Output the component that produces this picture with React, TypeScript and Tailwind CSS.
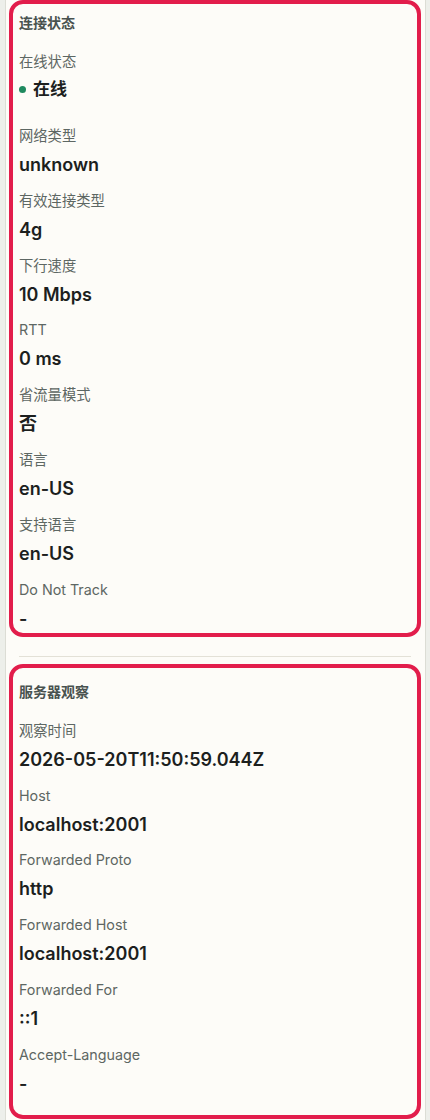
import React from "react";

type Item = { label: string; value: string; online?: boolean };

const connection: Item[] = [
  { label: "在线状态", value: "在线", online: true },
  { label: "网络类型", value: "unknown" },
  { label: "有效连接类型", value: "4g" },
  { label: "下行速度", value: "10 Mbps" },
  { label: "RTT", value: "0 ms" },
  { label: "省流量模式", value: "否" },
  { label: "语言", value: "en-US" },
  { label: "支持语言", value: "en-US" },
  { label: "Do Not Track", value: "-" },
];

const server: Item[] = [
  { label: "观察时间", value: "2026-05-20T11:50:59.044Z" },
  { label: "Host", value: "localhost:2001" },
  { label: "Forwarded Proto", value: "http" },
  { label: "Forwarded Host", value: "localhost:2001" },
  { label: "Forwarded For", value: "::1" },
  { label: "Accept-Language", value: "-" },
];

function Row({ item }: { item: Item }) {
  return (
    <div className={item.online ? "flex flex-col mb-[11px]" : "flex flex-col"}>
      <div className="text-[14.3px] leading-5 text-[#5d6763]">{item.label}</div>
      <div
        className={
          (item.online ? "mt-[3px] " : "mt-[5px] ") +
          "h-7 flex items-center text-[18px] leading-7 font-semibold text-[#1c1f1e]"
        }
      >
        {item.online ? (
          <>
            <span className="w-[7px] h-[7px] rounded-full bg-[#1f8a5f] mr-[7px]" />
            <span className="font-bold text-[17px]">{item.value}</span>
          </>
        ) : (
          item.value
        )}
      </div>
    </div>
  );
}

function Card({
  title,
  items,
  className,
}: {
  title: string;
  items: Item[];
  className: string;
}) {
  return (
    <section
      className={
        "ml-[3px] mr-[4px] border-4 border-[#e21d4b] rounded-[14px] pl-[6px] pr-[6px] " +
        className
      }
    >
      <h2 className="text-[14px] leading-5 font-bold text-[#49524f]">{title}</h2>
      <div className="mt-[19px] flex flex-col gap-[11.85px]">
        {items.map((it) => (
          <Row key={it.label + it.value} item={it} />
        ))}
      </div>
    </section>
  );
}

export default function App() {
  return (
    <div
      className="min-h-screen w-full bg-[#edefea]"
      style={{ fontFamily: 'Inter, "Noto Sans CJK SC", sans-serif' }}
    >
      <div className="ml-[5px] mr-[4px] min-h-screen bg-[#fdfcf8] border-x border-[#dcddd5]">
        <Card title="连接状态" items={connection} className="pt-[9px] pb-0" />
        <div className="mt-[19px] mb-[7px] ml-[13px] mr-[14px] h-px bg-[#e3e1d7]" />
        <Card title="服务器观察" items={server} className="pt-[14px] pb-[17px]" />
      </div>
    </div>
  );
}
